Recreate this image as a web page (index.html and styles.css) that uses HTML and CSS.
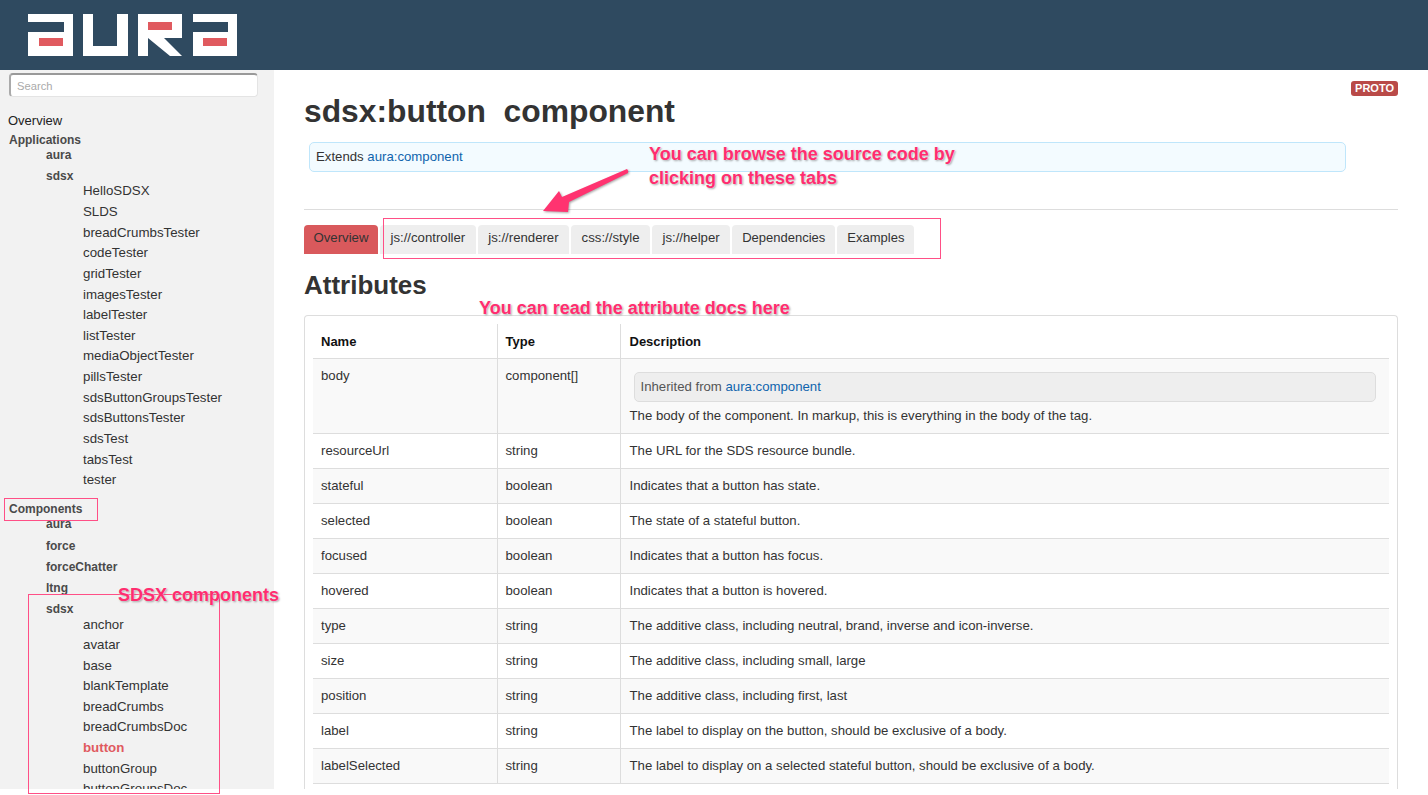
FILE: index.html
```html
<!DOCTYPE html>
<html>
<head>
    <title>sdsx:button component</title>
    <link rel="stylesheet" href="styles.css">
</head>
<body>
    <header class="topbar">
        <svg class="logo" width="210" height="42" viewBox="0 0 210 42">
            <g fill="#fff">
                <path d="M0 0H45V42H0V18H36V8H0Z"/>
                <path d="M55 0H65V32H89V0H100V42H55Z"/>
                <path d="M110 0H154V24H136L154 42H142L120 24V42H110Z"/>
                <path d="M165 0H209V42H165V18H200V8H165Z"/>
            </g>
            <g fill="#e05a5f">
                <rect x="11" y="24" width="24" height="8"/>
                <rect x="120" y="8" width="24" height="8"/>
                <rect x="175" y="24" width="24" height="8"/>
            </g>
        </svg>
    </header>

    <div class="page">
        <nav class="sidebar">
            <input class="search" type="text" placeholder="Search">
            <a class="overview-link">Overview</a>
            <div class="group-title">Applications</div>
            <div class="ns">aura</div>
            <div class="ns ns-short">sdsx</div>
            <ul class="items">
                <li>HelloSDSX</li>
                <li>SLDS</li>
                <li>breadCrumbsTester</li>
                <li>codeTester</li>
                <li>gridTester</li>
                <li>imagesTester</li>
                <li>labelTester</li>
                <li>listTester</li>
                <li>mediaObjectTester</li>
                <li>pillsTester</li>
                <li>sdsButtonGroupsTester</li>
                <li>sdsButtonsTester</li>
                <li>sdsTest</li>
                <li>tabsTest</li>
                <li>tester</li>
            </ul>
            <div class="group-title group-components">Components</div>
            <div class="ns">aura</div>
            <div class="ns">force</div>
            <div class="ns">forceChatter</div>
            <div class="ns">ltng</div>
            <div class="ns">sdsx</div>
            <ul class="items items-tight">
                <li>anchor</li>
                <li>avatar</li>
                <li>base</li>
                <li>blankTemplate</li>
                <li>breadCrumbs</li>
                <li>breadCrumbsDoc</li>
                <li class="current">button</li>
                <li>buttonGroup</li>
                <li>buttonGroupsDoc</li>
            </ul>
        </nav>

        <main class="content">
            <span class="proto">PROTO</span>
            <h1>sdsx:button&nbsp; component</h1>
            <div class="extends">Extends <a>aura:component</a></div>
            <hr>
            <div class="tabs">
                <a class="tab active">Overview</a>
                <a class="tab">js://controller</a>
                <a class="tab">js://renderer</a>
                <a class="tab">css://style</a>
                <a class="tab">js://helper</a>
                <a class="tab tab-word">Dependencies</a>
                <a class="tab tab-word">Examples</a>
            </div>
            <h2>Attributes</h2>
            <div class="card">
                <table>
                    <thead>
                        <tr><th class="col-name">Name</th><th class="col-type">Type</th><th>Description</th></tr>
                    </thead>
                    <tbody>
                        <tr>
                            <td>body</td>
                            <td>component[]</td>
                            <td class="body-desc">
                                <div class="inherited">Inherited from <a>aura:component</a></div>
                                The body of the component. In markup, this is everything in the body of the tag.
                            </td>
                        </tr>
                        <tr><td>resourceUrl</td><td>string</td><td>The URL for the SDS resource bundle.</td></tr>
                        <tr><td>stateful</td><td>boolean</td><td>Indicates that a button has state.</td></tr>
                        <tr><td>selected</td><td>boolean</td><td>The state of a stateful button.</td></tr>
                        <tr><td>focused</td><td>boolean</td><td>Indicates that a button has focus.</td></tr>
                        <tr><td>hovered</td><td>boolean</td><td>Indicates that a button is hovered.</td></tr>
                        <tr><td>type</td><td>string</td><td>The additive class, including neutral, brand, inverse and icon-inverse.</td></tr>
                        <tr><td>size</td><td>string</td><td>The additive class, including small, large</td></tr>
                        <tr><td>position</td><td>string</td><td>The additive class, including first, last</td></tr>
                        <tr><td>label</td><td>string</td><td>The label to display on the button, should be exclusive of a body.</td></tr>
                        <tr><td>labelSelected</td><td>string</td><td>The label to display on a selected stateful button, should be exclusive of a body.</td></tr>
                    </tbody>
                </table>
            </div>
        </main>
    </div>

    <!-- annotations drawn on top of the screenshot -->
    <div class="box box-tabs"></div>
    <div class="box box-components"></div>
    <div class="box box-sdsx"></div>
    <div class="note note-source">You can browse the source code by<br>clicking on these tabs</div>
    <div class="note note-attrs">You can read the attribute docs here</div>
    <div class="note note-sdsx">SDSX components</div>
    <svg class="arrow" width="90" height="50" viewBox="0 0 90 50">
        <path d="M87 4Q89 6 88 8L29 37L28 47L3 46L19 26L22 32Z" fill="#ff3370"/>
    </svg>
</body>
</html>
```

FILE: styles.css
```css
html, body {
    margin: 0;
    padding: 0;
}

body {
    font-family: "Liberation Sans", Arial, sans-serif;
    font-size: 13.2px;
    color: #333;
    background: #fff;
    height: 795px;
    overflow: hidden;
    position: relative;
}

.topbar {
    height: 70px;
    background-color: #2f4a60;
    padding: 14px 0 0 28px;
    box-sizing: border-box;
}

.logo {
    display: block;
}

.page {
    display: flex;
    height: 719px;
    overflow: hidden;
}

/* left navigation */
.sidebar {
    width: 274px;
    flex: none;
    background-color: #f2f2f2;
    padding: 3px 0 0 0;
    box-sizing: border-box;
    overflow: hidden;
}

.search {
    display: block;
    width: 249px;
    height: 24px;
    margin: 0 0 0 9px;
    padding: 0 6px;
    box-sizing: border-box;
    font-family: inherit;
    font-size: 11.2px;
    background: #fff;
    border: 1px solid #e4e4e4;
    border-top: 2px solid #999;
    border-left: 2px solid #aaa;
    border-radius: 4px;
    outline: none;
}

.search::placeholder {
    color: #aaa;
}

.overview-link {
    display: block;
    margin: 16px 0 0 8px;
    font-size: 13px;
    line-height: 15px;
    color: #222;
}

.group-title {
    margin: 5px 0 0 9px;
    font-size: 12px;
    line-height: 15px;
    font-weight: bold;
    color: #4a4a4a;
}

.group-components {
    margin-top: 15px;
}

.ns {
    margin: 6.3px 0 0 46px;
    font-size: 12px;
    line-height: 15px;
    font-weight: bold;
    color: #4a4a4a;
}

.ns-short {
    margin-top: 6.2px;
}

.group-title + .ns {
    margin-top: 0;
}

.items {
    list-style: none;
    margin: 0;
    padding: 0 0 0 83px;
}

.items li {
    margin-top: 5.65px;
    font-size: 13.3px;
    line-height: 15px;
    color: #333;
}

.items li:first-child {
    margin-top: -0.9px;
}

.items-tight li {
    margin-top: 5.57px;
}

.items li.current {
    font-weight: bold;
    color: #e05a5f;
}

/* main column */
.content {
    flex: 1;
    padding: 0 30px 0 30px;
    position: relative;
    min-width: 0;
}

.proto {
    position: absolute;
    top: 11px;
    right: 30px;
    background: #b94a48;
    color: #fff;
    font-size: 11px;
    font-weight: bold;
    line-height: 15px;
    padding: 0 4px;
    border-radius: 3px;
}

h1 {
    margin: 23px 0 0 0;
    font-size: 31.8px;
    line-height: 36px;
    font-weight: bold;
    color: #333;
}

.extends {
    margin: 13px 52px 0 5px;
    height: 30px;
    line-height: 28px;
    padding-left: 6px;
    box-sizing: border-box;
    background: #f3fbff;
    border: 1px solid #bfe6fb;
    border-radius: 5px;
}

a {
    color: #0f64ad;
}

hr {
    margin: 37px 0 0 0;
    border: none;
    border-top: 1px solid #ddd;
}

.tabs {
    display: flex;
    gap: 2px;
    margin-top: 15px;
}

.tab {
    height: 29px;
    line-height: 26px;
    padding: 0 10.5px;
    background: #eee;
    color: #333;
    border-radius: 4px 4px 0 0;
}

.tab.active {
    background: #d9595c;
    padding: 0 9.5px;
}

.tab-word {
    font-size: 13px;
    padding: 0 10px;
}

h2 {
    margin: 15px 0 0 0;
    font-size: 26px;
    line-height: 32px;
    font-weight: bold;
    color: #333;
}

.card {
    margin-top: 14px;
    height: 480px;
    border: 1px solid #ddd;
    border-bottom: none;
    border-radius: 4px 4px 0 0;
    padding: 8px 8px 0 8px;
    box-sizing: border-box;
    overflow: hidden;
}

table {
    width: 100%;
    border-collapse: collapse;
    table-layout: fixed;
}

th {
    text-align: left;
    font-size: 13px;
    font-weight: bold;
    color: #111;
    height: 34px;
    padding: 2px 8px 0 8px;
    border-left: 1px solid #ddd;
    border-bottom: 1px solid #ddd;
    box-sizing: border-box;
}

th:first-child, td:first-child {
    border-left: none;
}

th:last-child, td:last-child {
    padding-left: 9px;
}

.col-name {
    width: 184px;
}

.col-type {
    width: 123px;
}

td {
    height: 35px;
    padding: 0 8px;
    border-left: 1px solid #ddd;
    border-bottom: 1px solid #ddd;
    box-sizing: border-box;
    color: #333;
}

tbody tr:nth-child(odd) td {
    background: #f9f9f9;
}

tbody tr:first-child td {
    height: 75px;
    vertical-align: top;
    padding-top: 9px;
}

tbody tr:first-child td.body-desc {
    padding-top: 13px;
}

.inherited {
    margin: 0 5px 6px 4px;
    height: 30px;
    line-height: 28px;
    padding-left: 6px;
    box-sizing: border-box;
    background: #eee;
    border: 1px solid #ddd;
    border-radius: 5px;
    color: #555;
}

/* pink annotations */
.note {
    position: absolute;
    color: #ff2d6f;
    font-weight: bold;
    font-size: 18px;
    line-height: 24px;
    text-shadow: 0 0 2px #fff, 1px 1px 2px rgba(0, 0, 0, 0.4);
    white-space: nowrap;
}

.note-source {
    left: 649px;
    top: 142px;
}

.note-attrs {
    left: 479px;
    top: 296px;
}

.note-sdsx {
    left: 118px;
    top: 583px;
}

.box {
    position: absolute;
    border: 1px solid #ff4f86;
    box-sizing: border-box;
}

.box-tabs {
    left: 383px;
    top: 218px;
    width: 558px;
    height: 41px;
}

.box-components {
    left: 4px;
    top: 498px;
    width: 94px;
    height: 23px;
}

.box-sdsx {
    left: 28px;
    top: 594px;
    width: 192px;
    height: 200px;
}

.arrow {
    position: absolute;
    left: 540px;
    top: 165px;
    filter: drop-shadow(1px 1px 1px rgba(0, 0, 0, 0.35));
}
```
